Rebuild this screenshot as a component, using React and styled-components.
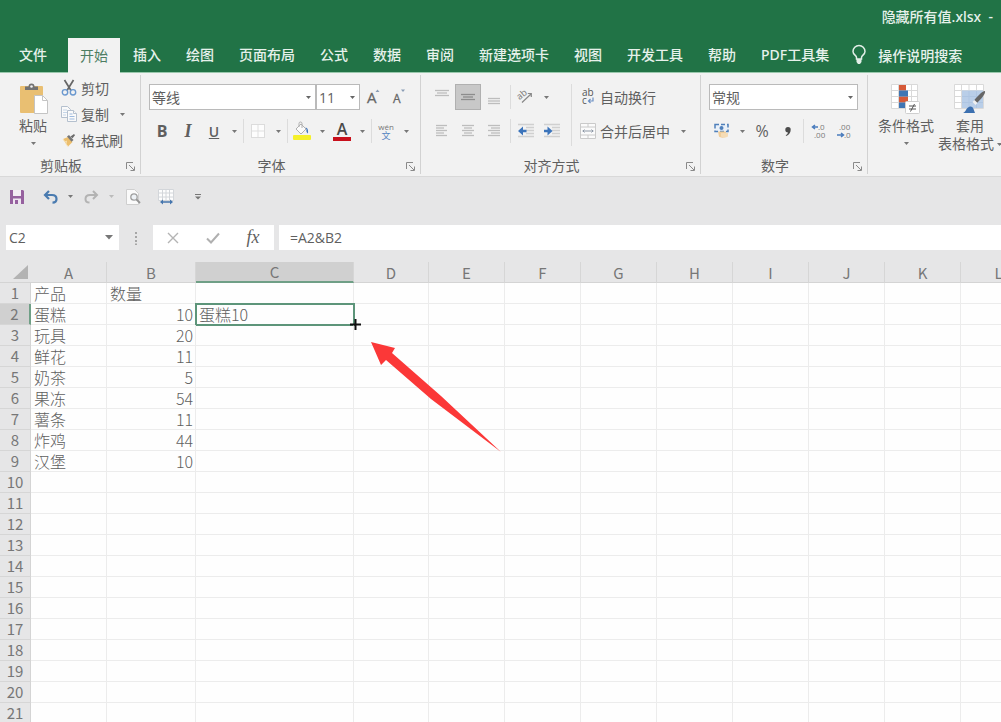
import { useState } from "react";
import styled, { createGlobalStyle } from "styled-components";

const TABS = [
  "开始", "插入", "绘图", "页面布局", "公式", "数据", "审阅",
  "新建选项卡", "视图", "开发工具", "帮助", "PDF工具集",
];

const COLUMNS = [
  { name: "A", width: 76 },
  { name: "B", width: 89 },
  { name: "C", width: 158 },
  { name: "D", width: 75 },
  { name: "E", width: 76 },
  { name: "F", width: 76 },
  { name: "G", width: 76 },
  { name: "H", width: 76 },
  { name: "I", width: 76 },
  { name: "J", width: 76 },
  { name: "K", width: 76 },
  { name: "L", width: 76 },
];

const DATA = [
  ["产品", "数量"],
  ["蛋糕", 10, "蛋糕10"],
  ["玩具", 20],
  ["鲜花", 11],
  ["奶茶", 5],
  ["果冻", 54],
  ["薯条", 11],
  ["炸鸡", 44],
  ["汉堡", 10],
];

const ROW_COUNT = 21;

export default function App() {
  const [activeTab, setActiveTab] = useState("开始");
  const [formula, setFormula] = useState("=A2&B2");
  const [cellName, setCellName] = useState("C2");

  return (
    <Window>
      <GlobalStyle />
      <Header>
        <TitleBar>隐藏所有值.xlsx&nbsp; -</TitleBar>
        <TabBar>
          <FileTab>文件</FileTab>
          {TABS.map(tab => (
            <Tab key={tab} $active={tab === activeTab} onClick={() => setActiveTab(tab)}>
              {tab}
            </Tab>
          ))}
          <TellMe>
            <BulbIcon />
            操作说明搜索
          </TellMe>
        </TabBar>
      </Header>

      <Ribbon>
        <ClipboardGroup />
        <FontGroup />
        <AlignGroup />
        <NumberGroup />
        <StylesGroup />
      </Ribbon>

      <QuickAccess>
        <ToolButton aria-label="保存"><SaveIcon /></ToolButton>
        <ToolButton aria-label="撤消"><UndoIcon /></ToolButton>
        <Caret label="撤消选项" />
        <ToolButton aria-label="恢复"><RedoIcon /></ToolButton>
        <Caret label="恢复选项" faded />
        <ToolButton aria-label="打印预览"><PreviewIcon /></ToolButton>
        <ToolButton aria-label="调整列宽"><TableWidthIcon /></ToolButton>
        <ToolButton aria-label="自定义快速访问工具栏"><CustomizeIcon /></ToolButton>
      </QuickAccess>

      <FormulaBar>
        <NameBox>
          <BarInput aria-label="名称框" value={cellName} onChange={e => setCellName(e.target.value)} />
          <svg width="8" height="5"><path d="M0 0h8L4 4.500z" fill="#777" /></svg>
        </NameBox>
        <Grip>
          <svg width="3" height="14" fill="#a6a6a6">
            <path d="M0 1h2v2H0zM0 5h2v2H0zM0 9h2v2H0zM0 12.500h2v1.500H0z" />
          </svg>
        </Grip>
        <FormulaButtons>
          <BarButton aria-label="取消">
            <svg width="12" height="12" fill="none" stroke="#b4b4b4" strokeWidth="1.400"><path d="M1 1l10 10M11 1L1 11" /></svg>
          </BarButton>
          <BarButton aria-label="输入">
            <svg width="14" height="12" fill="none" stroke="#b0b0b0" strokeWidth="2"><path d="M1 6.500l4 4L13 1.500" /></svg>
          </BarButton>
          <FxButton aria-label="插入函数">fx</FxButton>
        </FormulaButtons>
        <FormulaInput aria-label="编辑栏" value={formula} onChange={e => setFormula(e.target.value)} />
      </FormulaBar>

      <Sheet>
        <Grid>
          <colgroup>
            <RowHeadCol />
            {COLUMNS.map(col => <SheetCol key={col.name} $width={col.width} />)}
          </colgroup>
          <thead>
            <tr>
              <Corner aria-label="全选">
                <svg width="15" height="14"><path d="M15 0v14H0z" fill="#b3b3b3" /></svg>
              </Corner>
              {COLUMNS.map(col => (
                <ColHead key={col.name} scope="col" $selected={col.name === "C"}>{col.name}</ColHead>
              ))}
            </tr>
          </thead>
          <tbody>
            {Array.from({ length: ROW_COUNT }, (_, r) => (
              <tr key={r}>
                <RowHead scope="row" $selected={r === 1}>{r + 1}</RowHead>
                {COLUMNS.map((col, c) => {
                  const value = DATA[r]?.[c];
                  const selected = r === 1 && col.name === "C";
                  return (
                    <Cell key={col.name} $number={typeof value === "number"} $selected={selected}>
                      {value}
                      {selected && <FillCursor />}
                      {selected && <PointerArrow />}
                    </Cell>
                  );
                })}
              </tr>
            ))}
          </tbody>
        </Grid>
      </Sheet>
    </Window>
  );
}

function Group({ label, width, children }) {
  return (
    <GroupBox $width={width}>
      <GroupBody>{children}</GroupBody>
      <GroupFooter>
        <GroupLabel>{label}</GroupLabel>
        <Launcher aria-label={`${label}设置`}>
          <svg width="9" height="9" fill="none" stroke="#8a8a8a">
            <path d="M.5 7V.5H7M3 3l5 5M8.500 4.500v4h-4" />
          </svg>
        </Launcher>
      </GroupFooter>
    </GroupBox>
  );
}

function Caret({ label, faded }) {
  return (
    <CaretButton aria-label={label}>
      <CaretMark color={faded ? "#bbb" : "#777"} />
    </CaretButton>
  );
}

function CaretMark({ color = "#777" }) {
  return <svg width="5" height="3"><path d="M0 0h5L2.500 3z" fill={color} /></svg>;
}

function Dropdown({ label, value, width }) {
  return (
    <SelectBox $width={width}>
      <Select aria-label={label} defaultValue={value}>
        <option>{value}</option>
      </Select>
      <CaretMark color="#666" />
    </SelectBox>
  );
}

function ClipboardGroup() {
  return (
    <Group label="剪贴板" width={141}>
      <PasteButton>
        <PasteIcon />
        粘贴
        <CaretMark />
      </PasteButton>
      <ClipboardList>
        <TextButton><CutIcon />剪切</TextButton>
        <SplitRow>
          <TextButton><CopyIcon />复制</TextButton>
          <Caret label="复制选项" />
        </SplitRow>
        <TextButton><BrushIcon />格式刷</TextButton>
      </ClipboardList>
    </Group>
  );
}

function FontGroup() {
  return (
    <Group label="字体" width={280}>
      <ToolRows>
        <ToolRow>
          <Dropdown label="字体" value="等线" width={167} />
          <Dropdown label="字号" value="11" width={44} />
          <ToolButton aria-label="增大字号"><FontSizeIcon size={15} up /></ToolButton>
          <ToolButton aria-label="减小字号"><FontSizeIcon size={12} /></ToolButton>
        </ToolRow>
        <ToolRow>
          <BoldButton>B</BoldButton>
          <ItalicButton>I</ItalicButton>
          <UnderlineButton>U</UnderlineButton>
          <Caret label="下划线选项" />
          <Separator />
          <ToolButton aria-label="边框"><BorderIcon /></ToolButton>
          <Caret label="边框选项" />
          <Separator />
          <ToolButton aria-label="填充颜色"><FillIcon /></ToolButton>
          <Caret label="填充颜色选项" />
          <FontColorButton aria-label="字体颜色"><span>A</span></FontColorButton>
          <Caret label="字体颜色选项" />
          <Separator />
          <PhoneticButton aria-label="拼音"><small>wén</small>文</PhoneticButton>
          <Caret label="拼音选项" />
        </ToolRow>
      </ToolRows>
    </Group>
  );
}

function AlignGroup() {
  return (
    <Group label="对齐方式" width={280}>
      <ToolRows>
        <ToolRow>
          <ToolButton aria-label="顶端对齐"><LinesIcon lines={[[0, 14], [2, 12], [0, 14]]} top={3} /></ToolButton>
          <ToolButton aria-label="垂直居中" $pressed><LinesIcon lines={[[0, 14], [2, 12], [0, 14]]} top={7} color="#8c8c8c" /></ToolButton>
          <ToolButton aria-label="底端对齐"><LinesIcon lines={[[1, 13], [1, 13], [1, 13]]} top={11} /></ToolButton>
          <Separator $wide />
          <ToolButton aria-label="方向"><OrientationIcon /></ToolButton>
          <Caret label="方向选项" />
        </ToolRow>
        <ToolRow>
          <ToolButton aria-label="左对齐"><LinesIcon lines={[[1, 12], [1, 9], [1, 12], [1, 9], [1, 12]]} top={4} /></ToolButton>
          <ToolButton aria-label="居中"><LinesIcon lines={[[1, 13], [3, 11], [1, 13], [3, 11], [1, 13]]} top={4} /></ToolButton>
          <ToolButton aria-label="右对齐"><LinesIcon lines={[[1, 13], [4, 13], [1, 13], [4, 13], [1, 13]]} top={4} /></ToolButton>
          <Separator $wide />
          <ToolButton aria-label="减少缩进量"><IndentIcon /></ToolButton>
          <ToolButton aria-label="增加缩进量"><IndentIcon increase /></ToolButton>
        </ToolRow>
      </ToolRows>
      <TallSeparator />
      <ToolRows>
        <TextButton><WrapIcon />自动换行</TextButton>
        <SplitRow>
          <TextButton><MergeIcon />合并后居中</TextButton>
          <Caret label="合并选项" />
        </SplitRow>
      </ToolRows>
    </Group>
  );
}

function NumberGroup() {
  return (
    <Group label="数字" width={167}>
      <ToolRows>
        <ToolRow>
          <Dropdown label="数字格式" value="常规" width={149} />
        </ToolRow>
        <ToolRow>
          <ToolButton aria-label="会计数字格式"><CurrencyIcon /></ToolButton>
          <Caret label="会计格式选项" />
          <PercentButton>%</PercentButton>
          <ToolButton aria-label="千位分隔样式">
            <svg width="6" height="9"><path d="M3 0a2.700 2.700 0 0 1 2.700 2.800C5.700 5.500 4 8 1.200 9l-.5-.9C2 7.400 2.800 6.500 3 5.400A2.700 2.700 0 0 1 3 0z" fill="#4c4c4c" /></svg>
          </ToolButton>
          <Separator />
          <ToolButton aria-label="增加小数位数"><DecimalIcon /></ToolButton>
          <ToolButton aria-label="减少小数位数"><DecimalIcon decrease /></ToolButton>
        </ToolRow>
      </ToolRows>
    </Group>
  );
}

function StylesGroup() {
  return (
    <StylesBody>
      <LargeButton>
        <ConditionalIcon />
        条件格式
        <CaretMark />
      </LargeButton>
      <LargeButton>
        <TableStyleIcon />
        套用
        <CaretLine>
          表格格式
          <CaretMark />
        </CaretLine>
      </LargeButton>
    </StylesBody>
  );
}

//
// Icons
//
const BulbIcon = () => (
  <svg width="14" height="20" viewBox="0 0 14 20" fill="none" stroke="#e3efe8" strokeWidth="1.500">
    <path d="M4.500 14v-1.500C4.500 10.500 1 9.500 1 6.500a6 6 0 0 1 12 0c0 3-3.500 4-3.500 6V14z" />
    <path d="M4.500 14h5v3l-1.500 2H6l-1.500-2z" fill="#e3efe8" stroke="none" />
  </svg>
);

const PasteIcon = () => (
  <svg width="29" height="31" viewBox="0 0 29 31">
    <rect x="1" y="3" width="23" height="27" rx="1" fill="#e9bf72" />
    <path d="M6 3.500h3.500a3 3 0 0 1 6 0H19V7H6z" fill="#727272" />
    <circle cx="12.500" cy="3.500" r="1.300" fill="#f2f2f2" />
    <path d="M15.500 12.500h8l5 5v13h-13z" fill="#fff" stroke="#c4c4c4" />
    <path d="M23.500 12.500v5h5" fill="none" stroke="#c4c4c4" />
  </svg>
);

const CutIcon = () => (
  <svg width="18" height="16" viewBox="0 0 18 16" fill="none">
    <path d="M4.500 0l6.500 10.500M13.500 0L7 10.500" stroke="#666" strokeWidth="1.700" />
    <circle cx="5" cy="12.300" r="2.700" stroke="#6a98cf" strokeWidth="1.400" />
    <circle cx="13" cy="12.300" r="2.700" stroke="#6a98cf" strokeWidth="1.400" />
  </svg>
);

const CopyIcon = () => (
  <svg width="18" height="18" viewBox="0 0 18 18" fill="#fafafa" stroke="#b4c0ce">
    <path d="M1.500 1.500h6l3 3v8h-9z" />
    <path d="M3 5h4M3 7.500h4M3 10h3" stroke="#c4d5e8" />
    <path d="M7.500 5.500h6l3 3v8h-9z" />
    <path d="M13.500 5.500v3h3" />
    <path d="M9.500 9h3M9.500 11.500h5M9.500 14h5" stroke="#9dbadf" />
  </svg>
);

const BrushIcon = () => (
  <svg width="18" height="14" viewBox="0 0 18 14">
    <path d="M3 6l5-2 4.500 5L8 13.500z" fill="#ecbe6d" />
    <path d="M3 6l2 3 1.500-1L6 11l2 2.500" fill="none" stroke="#f7e0b2" />
    <path d="M7 3.500L9 2l4.500 5-2 1.700z" fill="#777" />
    <path d="M10.500 3.500L14 1l1 1.200-2.500 3z" fill="#6a6a6a" />
  </svg>
);

const FontSizeIcon = ({ size, up }) => (
  <svg width="18" height="18" viewBox="0 0 18 18">
    <text x="3" y="15" fontFamily="Open Sans" fontSize={size} fill="#666" stroke="#666" strokeWidth=".3">A</text>
    <path d={up ? "M11.500 4l2-2.500 2 2.500z" : "M11 1.500h4l-2 2.500z"} fill="#8a9db5" />
  </svg>
);

const BorderIcon = () => (
  <svg width="14" height="14" viewBox="0 0 14 14">
    <rect x=".5" y=".5" width="13" height="13" fill="#fdfdfd" stroke="#dcdcdc" />
    <path d="M7 1v12M1 7h12" stroke="#dfdfdf" />
  </svg>
);

const FillIcon = () => (
  <svg width="20" height="20" viewBox="0 0 20 20">
    <path d="M4 8l5-5 5 5-5 5z" fill="#fbfbfb" stroke="#b0b0b0" />
    <path d="M7 6V2.500a1.500 1.500 0 0 1 3 0V7" fill="none" stroke="#b0b0b0" />
    <path d="M13.500 6.500c2 .5 3 2 2.500 6-1.500-1-2-2.500-1.500-4z" fill="#4377bd" />
    <rect x="1" y="14" width="18" height="5" rx="1" fill="#f5f02b" />
  </svg>
);

const LinesIcon = ({ lines, top, color = "#bdbdbd" }) => (
  <svg width="14" height="20" viewBox="0 0 14 20">
    {lines.map(([from, to], i) => (
      <path key={i} d={`M${from} ${top + i * 2.5 + 0.5}H${to}`} stroke={color} strokeWidth="1.300" />
    ))}
  </svg>
);

const OrientationIcon = () => (
  <svg width="18" height="18" viewBox="0 0 18 18">
    <text x="1" y="10" fontFamily="Open Sans" fontSize="9" fill="#777" transform="rotate(-40 5 9)">ab</text>
    <path d="M5 14.500L14 6M14.300 9V5.500h-3.500" fill="none" stroke="#888" strokeWidth="1.200" />
  </svg>
);

const IndentIcon = ({ increase }) => (
  <svg width="18" height="14" viewBox="0 0 18 14">
    <path d="M1 .5h16M9 3.500h8M9 6.500h8M9 9.500h8M1 12.500h16" stroke="#d0d0d0" strokeWidth="1.300" />
    <path
      d={increase ? "M1 5.800h3.500V2.500L9.500 7l-5 4.500V8.200H1z" : "M9.500 5.800H6V2.500L1 7l5 4.500V8.200h3.500z"}
      fill="#3c74bb"
    />
  </svg>
);

const WrapIcon = () => (
  <svg width="18" height="18" viewBox="0 0 18 18">
    <text x="3" y="8" fontFamily="Open Sans" fontSize="10" fill="#555">ab</text>
    <text x="3" y="16" fontFamily="Open Sans" fontSize="10" fill="#555">c</text>
    <path d="M14 9.500v3.500H9.500M11.500 11L9.500 13l2 2" fill="none" stroke="#6a8fc4" strokeWidth="1.200" />
  </svg>
);

const MergeIcon = () => (
  <svg width="18" height="18" viewBox="0 0 18 18">
    <path d="M1.500 1.500h15v15h-15zM1.500 5h15M1.500 13h15M9 1.500V5M9 13v3.500" fill="#fbfbfb" stroke="#cacaca" />
    <path d="M3.500 9h11M5.500 7.500L4 9l1.500 1.500M12.500 7.500L14 9l-1.500 1.500" fill="none" stroke="#8d98a6" />
  </svg>
);

const CurrencyIcon = () => (
  <svg width="18" height="18" viewBox="0 0 18 18">
    <rect x="2" y="2.500" width="13" height="7" fill="#eaf1f9" stroke="#4f80bb" strokeWidth="1.500" strokeDasharray="4 2" />
    <circle cx="8.500" cy="6" r="2" fill="#4f80bb" />
    <path d="M5 9.500h8v5c-1 1.500-6 1.500-7 0z" fill="#f0cd9a" />
    <path d="M8 11h7v3.500c-2 1.500-5 1.500-7 0z" fill="#f5dcb6" />
  </svg>
);

const DecimalIcon = ({ decrease }) => (
  <svg width="18" height="18" viewBox="0 0 18 18" fontFamily="Open Sans" fontSize="8" fill="#7a7a7a">
    <text x={decrease ? 4 : 9} y="8">{decrease ? ".00" : ".0"}</text>
    <text x={decrease ? 9 : 5} y="16">{decrease ? ".0" : ".00"}</text>
    <path
      d={decrease ? "M2 13h6M6 11l2.500 2L6 15" : "M9 5H3.500M6 3L3.500 5 6 7"}
      fill="none"
      stroke="#4a7cbd"
      strokeWidth="1.500"
    />
  </svg>
);

const ConditionalIcon = () => (
  <svg width="30" height="30" viewBox="0 0 30 30">
    <path d="M.5.500h26v24H.5zM7.500.500v24M20.500.500v24M.5 6.500h26M.5 12.500h26M.5 18.500h26" fill="#fff" stroke="#d9d9d9" />
    <path d="M8 1h7v5.500H8zM8 12.500h9v6H8z" fill="#d65a38" />
    <path d="M8 6.500h9v6H8zM8 18.500h6V24H8z" fill="#3f76b4" />
    <rect x="14.500" y="17.500" width="14" height="12" rx="1" fill="#fff" stroke="#cfcfcf" />
    <path d="M18 22h7M18 25h7M23.500 20l-4 7.500" stroke="#555" fill="none" />
  </svg>
);

const TableStyleIcon = () => (
  <svg width="32" height="30" viewBox="0 0 32 30">
    <path d="M.5.500h29v24H.5zM7.500.500v24M15 .5v24M22.500.500v24M.5 6.500h29M.5 12.500h29M.5 18.500h29" fill="#fff" stroke="#d9d9d9" />
    <path d="M8 6.500h21V24H8z" fill="#b9cee8" />
    <path d="M15 7v17M22.500 7v17M8 12.500h21M8 18.500h21" stroke="#aec5e2" />
    <path d="M31 7c1 3-5 9-8 12l-3-2.500C23 13 28 7 31 7z" fill="#666" />
    <path d="M20.500 16l3 3-2 2-3-3z" fill="#f0f0f0" />
    <path d="M15 23c2-1 4 0 4.500 2l1.500 4H9c3-1 3-5 6-6z" fill="#3c70b0" />
  </svg>
);

const SaveIcon = () => (
  <svg width="14" height="14" viewBox="0 0 14 14">
    <path d="M0 0h13l1 1v13H0z" fill="#96619f" />
    <path d="M3 0h8v6H3z" fill="#f3ecf4" />
    <path d="M3 8.500h8V14H3z" fill="#eee6f0" />
    <path d="M5 10h3v4H5z" fill="#96619f" />
  </svg>
);

const UndoIcon = () => (
  <svg width="15" height="14" viewBox="0 0 15 14" fill="none" stroke="#4a7bb0" strokeWidth="2.200">
    <path d="M6 1L2 5l4 4M2.500 5H9c3 0 4.500 1.500 4.500 4 0 2.200-1.500 3.600-4 3.600" />
  </svg>
);

const RedoIcon = () => (
  <svg width="15" height="14" viewBox="0 0 15 14" fill="none" stroke="#b3b3b3" strokeWidth="2">
    <path d="M9 1l4 4-4 4M12.500 5H6C3 5 1.500 6.500 1.500 9c0 2.200 1.500 3.600 4 3.600" />
  </svg>
);

const PreviewIcon = () => (
  <svg width="16" height="16" viewBox="0 0 16 16" fill="none">
    <path d="M1.500.500h8l4 4v11h-12z" fill="#fafafa" stroke="#cfcfcf" />
    <circle cx="9" cy="8" r="3.200" fill="#eef2f6" stroke="#a0a0a0" strokeWidth="1.300" />
    <path d="M11.500 10.500L15 14" stroke="#949494" strokeWidth="1.800" />
  </svg>
);

const TableWidthIcon = () => (
  <svg width="16" height="16" viewBox="0 0 16 16">
    <path d="M.5.500h15v11H.5zM4.500.500v11M8 .5v11M11.500.500v11M.5 4h15M.5 8h15" fill="#fdfdfd" stroke="#d3d6da" />
    <path d="M5 10.500v5L2 13zM12 10.500v5l3-2.500zM5 12.300h7v1.500H5z" fill="#4575ad" />
  </svg>
);

const CustomizeIcon = () => (
  <svg width="6" height="6"><path d="M0 0h6v1H0zM0 2.500h6L3 5.500z" fill="#777" /></svg>
);

const FillCursor = () => (
  <CursorBox width="13" height="13">
    <path d="M5.500 1h2v4.500H12v2H7.500V12h-2V7.500H1v-2h4.500z" fill="#111" />
  </CursorBox>
);

const PointerArrow = () => (
  <ArrowBox width="131" height="112" viewBox="0 0 131 112">
    <path d="M0 0L24 6 21 11 70 54 130 110 60 57 15 18 10 23z" fill="#fb3838" />
  </ArrowBox>
);

//
// Styled Components
//
const GlobalStyle = createGlobalStyle`
  *, *::before, *::after {
    box-sizing: border-box;
  }

  body {
    margin: 0;
    overflow: hidden;
    font-family: "Open Sans", "Noto Sans CJK SC", sans-serif;
    font-size: 14px;
    color: #5f5f5f;
    background: #e6e6e7;
  }

  button, input, select {
    margin: 0;
    padding: 0;
    border: 0;
    font: inherit;
    color: inherit;
    background: none;
  }

  svg {
    display: block;
    flex: none;
    overflow: visible;
  }
`;

const Window = styled.div`
  display: flex;
  flex-direction: column;
  height: 100vh;
  overflow: hidden;
`;

const Header = styled.header`
  flex: none;
  background: #217346;
  color: #e6f1eb;
  font-family: "Noto Sans", "Noto Sans CJK SC", sans-serif;
  font-weight: 500;
`;

const TitleBar = styled.div`
  height: 38px;
  padding: 7px 8px 0 0;
  line-height: 20px;
  text-align: right;
`;

const TabBar = styled.nav`
  display: flex;
  gap: 1px;
  height: 34px;
  white-space: nowrap;
`;

const Tab = styled.button`
  position: relative;
  flex: none;
  height: ${(props) => (props.$active ? "35px" : "34px")};
  padding: 0 12px;
  font-weight: ${(props) => (props.$active ? 400 : 500)};
  line-height: 34px;
  color: ${(props) => (props.$active ? "#4d7d62" : "#e6f1eb")};
  background: ${(props) => (props.$active ? "#f2f2f2" : "transparent")};
`;

const FileTab = styled(Tab)`
  padding: 0 20px 0 19px;
`;

const TellMe = styled.button`
  display: flex;
  align-items: center;
  gap: 12px;
  margin-left: 10px;
`;

const Ribbon = styled.section`
  display: flex;
  flex: none;
  padding: 2px 0;
  border-top: 1px solid #9ac8ad;
  border-bottom: 1px solid #d9d9d9;
  background: #f2f2f2;
  white-space: nowrap;
  overflow: hidden;
`;

const GroupBox = styled.div`
  display: flex;
  flex: none;
  flex-direction: column;
  width: ${(props) => props.$width}px;
  border-right: 1px solid #d2d2d2;
`;

const GroupBody = styled.div`
  display: flex;
  height: 83px;
  padding-left: 8px;
`;

const GroupFooter = styled.div`
  display: flex;
  align-items: center;
  height: 16px;
`;

const GroupLabel = styled.div`
  flex: 1;
  text-align: center;
  line-height: 16px;
`;

const Launcher = styled.button`
  width: 18px;
  padding-left: 4px;
`;

const CaretButton = styled.button`
  display: flex;
  flex: none;
  align-items: center;
  justify-content: center;
  width: 14px;
  height: 26px;
`;

const ToolButton = styled.button`
  display: flex;
  flex: none;
  align-items: center;
  justify-content: center;
  width: 26px;
  height: 26px;
  border: 1px solid ${(props) => (props.$pressed ? "#b0b0b0" : "transparent")};
  background: ${(props) => (props.$pressed ? "#c8c8c8" : "transparent")};
`;

const BoldButton = styled(ToolButton)`
  font-size: 16px;
  font-weight: 700;
`;

const ItalicButton = styled(ToolButton)`
  font-family: "Liberation Serif", serif;
  font-size: 18px;
  font-weight: 700;
  font-style: italic;
`;

const UnderlineButton = styled(ToolButton)`
  font-weight: 600;
  text-decoration: underline;
`;

const PercentButton = styled(ToolButton)`
  font-size: 16px;
`;

const FontColorButton = styled(ToolButton)`
  span {
    width: 18px;
    border-bottom: 4px solid #c8101c;
    font-size: 16px;
    font-weight: 600;
    line-height: 15px;
    text-align: center;
    color: #4a4a4a;
  }
`;

const PhoneticButton = styled(ToolButton)`
  flex-direction: column;
  font-size: 9px;
  line-height: 9px;
  color: #5585c2;

  small {
    font-size: 8px;
    line-height: 8px;
    color: #777;
  }
`;

const TextButton = styled.button`
  display: flex;
  align-items: center;
  gap: 3px;
  height: 26px;
  padding-left: 2px;
`;

const SplitRow = styled.div`
  display: flex;
  gap: 6px;
`;

const ToolRows = styled.div`
  display: flex;
  flex-direction: column;
  gap: 8px;
  padding-top: 9px;
`;

const ToolRow = styled.div`
  display: flex;
  align-items: center;
  height: 26px;
`;

const Separator = styled.span`
  flex: none;
  width: 1px;
  height: 24px;
  margin: ${(props) => (props.$wide ? "0 2px 0 3px" : "0 1px 0 2px")};
  background: #dcdcdc;
`;

const TallSeparator = styled.span`
  width: 1px;
  height: 62px;
  margin: 9px 5px 0 6px;
  background: #dcdcdc;
`;

const SelectBox = styled.span`
  position: relative;
  width: ${(props) => props.$width}px;

  svg {
    position: absolute;
    top: 12px;
    right: 5px;
    pointer-events: none;
  }
`;

const Select = styled.select`
  display: block;
  width: 100%;
  height: 26px;
  padding: 0 2px;
  border: 1px solid #bababa;
  border-radius: 0;
  background: #fff;
  appearance: none;
`;

const LargeButton = styled.button`
  display: flex;
  flex: none;
  flex-direction: column;
  align-items: center;
  padding-top: 9px;
  line-height: 18px;

  > svg:first-child {
    margin-bottom: 3px;
  }

  > svg:last-child {
    margin-top: 7px;
  }
`;

const PasteButton = styled(LargeButton)`
  width: 50px;
  padding-top: 8px;
`;

const ClipboardList = styled.div`
  display: flex;
  flex-direction: column;
`;

const StylesBody = styled.div`
  display: flex;
  gap: 4px;
  padding-left: 10px;
`;

const CaretLine = styled.span`
  display: flex;
  align-items: center;
  gap: 3px;
`;

const QuickAccess = styled.div`
  display: grid;
  flex: none;
  grid-template-columns: 34px 32px 8px 34px 6px 38px 28px 36px;
  align-items: center;
  justify-items: center;
  height: 39px;
`;

const FormulaBar = styled.div`
  display: flex;
  flex: none;
  padding: 9px 0 12px 6px;
`;

const NameBox = styled.div`
  display: flex;
  align-items: center;
  width: 113px;
  padding: 0 6px 0 3px;
  background: #fff;
`;

const BarInput = styled.input`
  flex: 1;
  min-width: 0;
  height: 25px;
  outline: none;
`;

const Grip = styled.div`
  display: flex;
  align-items: center;
  justify-content: center;
  width: 34px;
`;

const FormulaButtons = styled.div`
  display: grid;
  grid-template-columns: repeat(3, 40px);
  justify-items: center;
  width: 121px;
  margin-right: 5px;
  background: #fff;
`;

const BarButton = styled(ToolButton)`
  height: 25px;
`;

const FxButton = styled(BarButton)`
  font-family: "Liberation Serif", serif;
  font-size: 18px;
  font-style: italic;
`;

const FormulaInput = styled(BarInput)`
  padding-left: 11px;
  background: #fff;
`;

const Sheet = styled.main`
  flex: 1;
  min-height: 0;
  overflow: hidden;
  background: #fefefe;
`;

const Grid = styled.table`
  width: 0;
  border-spacing: 0;
  table-layout: fixed;
  font-size: 16px;
  font-weight: 300;
  line-height: 20px;
  font-family: "Noto Sans CJK SC", sans-serif;
`;

const RowHeadCol = styled.col`
  width: 31px;
`;

const SheetCol = styled.col`
  width: ${(props) => props.$width}px;
`;

const Corner = styled.td`
  height: 21px;
  padding: 0 0 0 13px;
  border-bottom: 1px solid #d4d4d4;
  background: #e6e6e7;
`;

const ColHead = styled.th`
  height: 21px;
  padding: 0;
  border-right: 1px solid #d6d6d6;
  border-bottom: ${(props) => (props.$selected ? "2px solid #6f9f86" : "1px solid #d4d4d4")};
  background: ${(props) => (props.$selected ? "#d0d0d0" : "#e6e6e7")};
  font-size: 15px;
  font-weight: 400;
  line-height: 19px;
  color: #777;
`;

const RowHead = styled.th`
  height: 21px;
  padding: 0;
  border-right: ${(props) => (props.$selected ? "2px solid #6f9f86" : "1px solid #d4d4d4")};
  border-bottom: 1px solid #d6d6d6;
  background: ${(props) => (props.$selected ? "#d0d0d0" : "#e6e6e7")};
  font-size: 15px;
  font-weight: 400;
  color: #777;
`;

const Cell = styled.td`
  position: relative;
  height: 21px;
  padding: 0 2px 0 3px;
  border-right: 1px solid #ececec;
  border-bottom: 1px solid #ececec;
  outline: ${(props) => (props.$selected ? "2px solid #5d957a" : "none")};
  outline-offset: -1px;
  text-align: ${(props) => (props.$number ? "right" : "left")};
  white-space: nowrap;
`;

const CursorBox = styled.svg`
  position: absolute;
  right: -9px;
  bottom: -7px;
  z-index: 2;
`;

const ArrowBox = styled.svg`
  position: absolute;
  top: 38px;
  left: 175px;
  z-index: 2;
`;
